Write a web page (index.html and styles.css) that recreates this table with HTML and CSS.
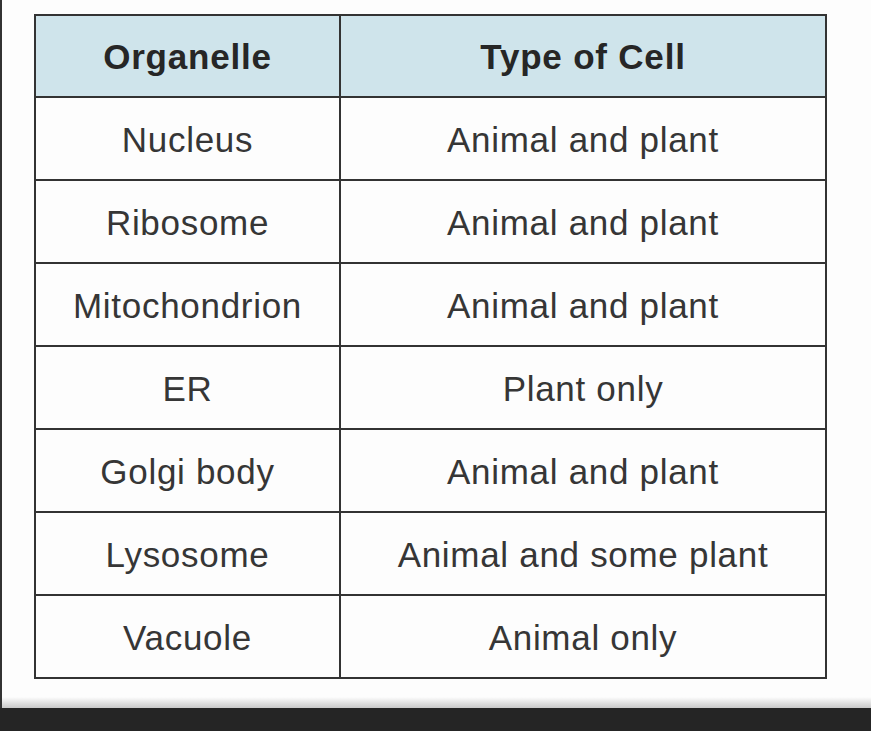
FILE: index.html
```html
<!DOCTYPE html>
<html lang="en">
<head>
<meta charset="utf-8">
<title>Organelles</title>
<link rel="stylesheet" href="styles.css">
</head>
<body>
<div class="screen">
  <div class="content">
    <div class="grid">
      <div class="cell head">Organelle</div>
      <div class="cell head">Type of Cell</div>
      <div class="cell">Nucleus</div>
      <div class="cell">Animal and plant</div>
      <div class="cell">Ribosome</div>
      <div class="cell">Animal and plant</div>
      <div class="cell">Mitochondrion</div>
      <div class="cell">Animal and plant</div>
      <div class="cell">ER</div>
      <div class="cell">Plant only</div>
      <div class="cell">Golgi body</div>
      <div class="cell">Animal and plant</div>
      <div class="cell">Lysosome</div>
      <div class="cell">Animal and some plant</div>
      <div class="cell">Vacuole</div>
      <div class="cell">Animal only</div>
    </div>
  </div>
  <div class="fade"></div>
</div>
<div class="bar"></div>
</body>
</html>
```
FILE: styles.css
```css
html, body {
  margin: 0;
  padding: 0;
  background: #fdfdfd;
}
body {
  width: 871px;
  height: 731px;
  overflow: hidden;
  font-family: "Liberation Sans", Arial, sans-serif;
}
.screen {
  height: 708px;
  border-left: 2px solid #333;
  box-sizing: border-box;
  display: flex;
  flex-direction: column;
  background: #fdfdfd;
}
.content {
  flex: 1;
  padding: 14px 0 0 32px;
}
.grid {
  display: grid;
  grid-template-columns: 305px 486px;
  grid-template-rows: 82px repeat(7, 83px);
  width: 793px;
  box-sizing: border-box;
  border-top: 2px solid #333;
  border-left: 2px solid #333;
}
.cell {
  box-sizing: border-box;
  border-right: 2px solid #333;
  border-bottom: 2px solid #333;
  display: flex;
  align-items: center;
  justify-content: center;
  font-size: 35px;
  letter-spacing: 0.7px;
  color: #363636;
  background: #fdfdfd;
  padding-top: 2px;
}
.cell.head {
  background: #cfe4eb;
  font-weight: bold;
  letter-spacing: 0.8px;
  color: #262626;
}
.fade {
  height: 11px;
  background: linear-gradient(#fdfdfd, #c9c9c9);
}
.bar {
  height: 23px;
  background: #252525;
}
```
